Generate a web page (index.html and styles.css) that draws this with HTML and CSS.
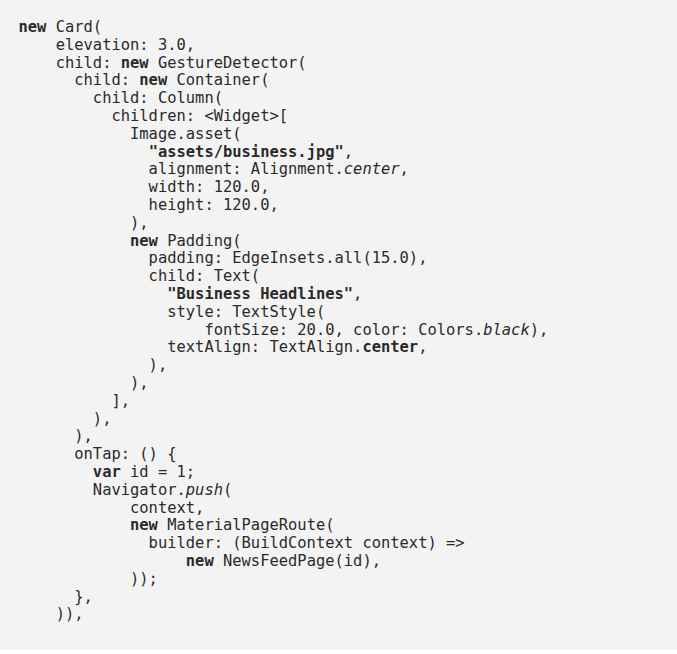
FILE: index.html
```html
<!DOCTYPE html>
<html>
<head>
<meta charset="utf-8">
<link rel="stylesheet" href="styles.css">
</head>
<body>
<pre class="code"><span class="kw">new</span> Card(
    elevation: 3.0,
    child: <span class="kw">new</span> GestureDetector(
      child: <span class="kw">new</span> Container(
        child: Column(
          children: &lt;Widget&gt;[
            Image.asset(
              <span class="str">"assets/business.jpg"</span>,
              alignment: Alignment.<span class="it">center</span>,
              width: 120.0,
              height: 120.0,
            ),
            <span class="kw">new</span> Padding(
              padding: EdgeInsets.all(15.0),
              child: Text(
                <span class="str">"Business Headlines"</span>,
                style: TextStyle(
                    fontSize: 20.0, color: Colors.<span class="it">black</span>),
                textAlign: TextAlign.<span class="kw">center</span>,
              ),
            ),
          ],
        ),
      ),
      onTap: () {
        <span class="kw">var</span> id = 1;
        Navigator.<span class="it">push</span>(
            context,
            <span class="kw">new</span> MaterialPageRoute(
              builder: (BuildContext context) =&gt;
                  <span class="kw">new</span> NewsFeedPage(id),
            ));
      },
    )),</pre>
</body>
</html>
```
FILE: styles.css
```css
html, body {
  margin: 0;
  padding: 0;
  background: #ffffff;
}
.code {
  margin: 0;
  padding: 19px 18px 26px 18.5px;
  background: #f3f3f3;
  color: #2a2a2a;
  font-family: "DejaVu Sans Mono", monospace;
  font-size: 15.45px;
  line-height: 17.8px;
  white-space: pre;
}
.kw, .str {
  font-weight: bold;
}
.it {
  font-style: italic;
}
```
